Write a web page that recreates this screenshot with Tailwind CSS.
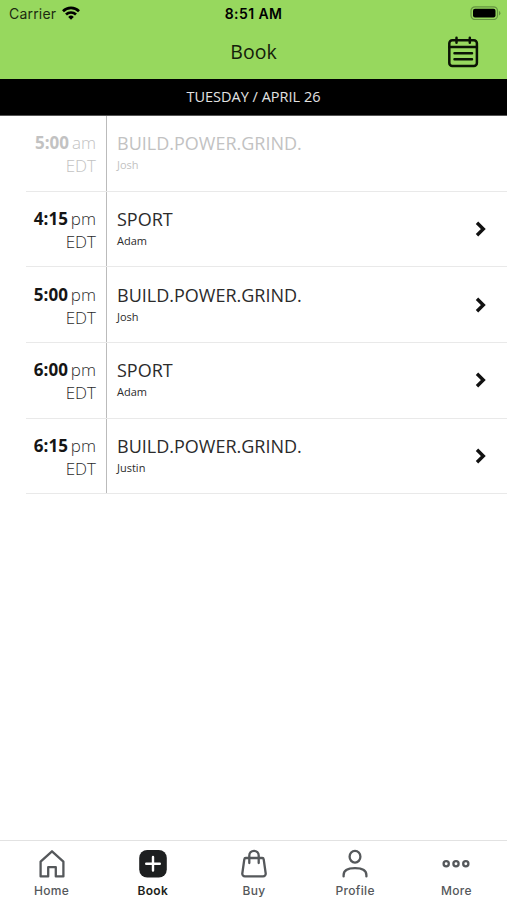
<!DOCTYPE html>
<html lang="en">
<head>
  <meta charset="UTF-8" />
  <meta name="viewport" content="width=device-width, initial-scale=1.0" />
  <title>Book</title>
  <script src="https://cdn.jsdelivr.net/npm/@tailwindcss/browser@4"></script>
</head>
<body class="bg-white h-screen overflow-hidden flex flex-col font-['Open_Sans',sans-serif] text-[#2b2b2b]">

  <!-- Header -->
  <header class="bg-[#97d85e] h-[79px] shrink-0 text-black">
    <div class="h-7 grid grid-cols-3 items-center font-['Inter',sans-serif] text-sm leading-none">
      <div class="flex items-center pl-[9px] gap-1.5">
        <span class="text-[14px] tracking-[0.2px] text-[#1c2b10]">Carrier</span>
        <svg class="w-[18px] h-[14px] -mt-0.5" viewBox="0 0 18 14" fill="none" stroke="#000" stroke-width="2.7">
          <path d="M1 5.2a11.5 11.5 0 0 1 16 0" />
          <path d="M4 8.5a7.2 7.2 0 0 1 10 0" />
          <path d="M9 13.7L6.2 10.9a4 4 0 0 1 5.6 0z" fill="#000" stroke="none" />
        </svg>
      </div>
      <div class="text-center font-semibold text-[14px] tracking-[0.4px] whitespace-nowrap">8:51 AM</div>
      <div class="flex justify-end pr-[6px]">
        <svg class="w-[31px] h-[14px] -mt-0.5" viewBox="0 0 31 14">
          <rect x="1" y="0.8" width="26.5" height="12.8" rx="4" fill="none" stroke="#659440" stroke-width="1.2" />
          <rect x="3" y="2.8" width="22.5" height="8.8" rx="2" />
          <path d="M29 5v4.4a2.4 2.4 0 0 0 0-4.4z" fill="#659440" />
        </svg>
      </div>
    </div>
    <div class="h-12 grid grid-cols-3 items-center">
      <div></div>
      <h1 class="text-center text-[19.5px] leading-6 text-[#14200a]">Book</h1>
      <div class="flex justify-end pr-[28px]">
        <svg class="w-8 h-8" viewBox="0 0 32 32" fill="none" stroke="#0b1305" stroke-width="2.5" stroke-linecap="round">
          <rect x="2.3" y="4.2" width="27.6" height="25.8" rx="3" />
          <path d="M2.3 11h27.6M9.5 1.8v5M22.8 1.8v5M7.5 17.3h17.5M7.5 23.3h17.5" />
        </svg>
      </div>
    </div>
  </header>

  <!-- Date -->
  <div class="bg-black h-[37px] shrink-0 flex items-center justify-center text-[#e2e2e2] text-[14.5px] leading-5 border-b border-[#555]">TUESDAY / APRIL 26</div>

  <!-- Classes -->
  <main class="flex-1 pl-[26px]">
    <div class="h-[75.7px] flex border-b border-[#e9e9e9] text-[#c2c2c2]">
      <div class="w-[81px] pr-[10px] pt-[15.4px] text-right border-r border-[#bbb] text-[17px] leading-[23px]">
        <div class="whitespace-nowrap"><b>5:00</b><span class="font-light ml-[3px]">am</span></div>
        <div class="font-light">EDT</div>
      </div>
      <div class="pl-[10px] pt-[15px] flex-1">
        <h2 class="text-[18px] leading-6">BUILD.POWER.GRIND.</h2>
        <p class="text-[11px] leading-5">Josh</p>
      </div>
    </div>

    <div class="h-[75.7px] flex border-b border-[#e9e9e9]">
      <div class="w-[81px] pr-[10px] pt-[15.4px] text-right border-r border-[#bbb] text-[17px] leading-[23px]">
        <div class="whitespace-nowrap"><b class="text-[#151515]">4:15</b><span class="font-light ml-[3px]">pm</span></div>
        <div class="font-light">EDT</div>
      </div>
      <div class="pl-[10px] pt-[15px] flex-1">
        <h2 class="text-[18px] leading-6">SPORT</h2>
        <p class="text-[11px] leading-5">Adam</p>
      </div>
      <svg class="w-3 h-4 self-center mr-5" viewBox="0 0 12 16" fill="none" stroke="#111" stroke-width="3.4"><path d="M2 1.8L8.3 8L2 14.2" /></svg>
    </div>

    <div class="h-[75.7px] flex border-b border-[#e9e9e9]">
      <div class="w-[81px] pr-[10px] pt-[15.4px] text-right border-r border-[#bbb] text-[17px] leading-[23px]">
        <div class="whitespace-nowrap"><b class="text-[#151515]">5:00</b><span class="font-light ml-[3px]">pm</span></div>
        <div class="font-light">EDT</div>
      </div>
      <div class="pl-[10px] pt-[15.4px] flex-1">
        <h2 class="text-[18px] leading-6">BUILD.POWER.GRIND.</h2>
        <p class="text-[11px] leading-5">Josh</p>
      </div>
      <svg class="w-3 h-4 self-center mr-5" viewBox="0 0 12 16" fill="none" stroke="#111" stroke-width="3.4"><path d="M2 1.8L8.3 8L2 14.2" /></svg>
    </div>

    <div class="h-[75.7px] flex border-b border-[#e9e9e9]">
      <div class="w-[81px] pr-[10px] pt-[15.4px] text-right border-r border-[#bbb] text-[17px] leading-[23px]">
        <div class="whitespace-nowrap"><b class="text-[#151515]">6:00</b><span class="font-light ml-[3px]">pm</span></div>
        <div class="font-light">EDT</div>
      </div>
      <div class="pl-[10px] pt-[15px] flex-1">
        <h2 class="text-[18px] leading-6">SPORT</h2>
        <p class="text-[11px] leading-5">Adam</p>
      </div>
      <svg class="w-3 h-4 self-center mr-5" viewBox="0 0 12 16" fill="none" stroke="#111" stroke-width="3.4"><path d="M2 1.8L8.3 8L2 14.2" /></svg>
    </div>

    <div class="h-[75.7px] flex border-b border-[#e9e9e9]">
      <div class="w-[81px] pr-[10px] pt-[15.4px] text-right border-r border-[#bbb] text-[17px] leading-[23px]">
        <div class="whitespace-nowrap"><b class="text-[#151515]">6:15</b><span class="font-light ml-[3px]">pm</span></div>
        <div class="font-light">EDT</div>
      </div>
      <div class="pl-[10px] pt-[15px] flex-1">
        <h2 class="text-[18px] leading-6">BUILD.POWER.GRIND.</h2>
        <p class="text-[11px] leading-5">Justin</p>
      </div>
      <svg class="w-3 h-4 self-center mr-5" viewBox="0 0 12 16" fill="none" stroke="#111" stroke-width="3.4"><path d="M2 1.8L8.3 8L2 14.2" /></svg>
    </div>
  </main>

  <!-- Tab bar -->
  <nav class="h-[60px] shrink-0 border-t border-[#e2e2e2] grid grid-cols-5 pl-px font-['Inter',sans-serif] text-[12px] leading-4 font-medium tracking-[0.3px] text-[#55585b]">
    <a class="flex flex-col items-center pt-2">
      <svg class="w-8 h-[30px]" viewBox="0 0 32 30" fill="none" stroke="currentColor" stroke-width="2.3" stroke-linejoin="round">
        <path d="M4.6 12.6L16 2.3l11.4 10.3v14.8h-7.6v-9.2h-7.6v9.2H4.6z" />
      </svg>
      <span class="mt-1">Home</span>
    </a>
    <a class="flex flex-col items-center pt-2 text-[#1d1f20] font-semibold">
      <svg class="w-8 h-[30px]" viewBox="0 0 32 30" fill="none">
        <rect x="2.2" y="1" width="27.6" height="27.6" rx="8" fill="currentColor" />
        <path d="M16 8v13.6M9.2 14.8h13.6" stroke="#fff" stroke-width="2.4" stroke-linecap="round" />
      </svg>
      <span class="mt-1">Book</span>
    </a>
    <a class="flex flex-col items-center pt-2">
      <svg class="w-8 h-[30px]" viewBox="0 0 32 30" fill="none" stroke="currentColor" stroke-width="2.3" stroke-linecap="round" stroke-linejoin="round">
        <path d="M7.8 9h16.4a1.5 1.5 0 0 1 1.5 1.3l2 14.2a2.6 2.6 0 0 1-2.6 2.9H6.9a2.6 2.6 0 0 1-2.6-2.9l2-14.2A1.5 1.5 0 0 1 7.8 9z" />
        <path d="M11.3 14V6.5a4.7 4.7 0 0 1 9.4 0V14" />
      </svg>
      <span class="mt-1">Buy</span>
    </a>
    <a class="flex flex-col items-center pt-2">
      <svg class="w-8 h-[30px]" viewBox="0 0 32 30" fill="none" stroke="currentColor" stroke-width="2.3" stroke-linecap="round">
        <ellipse cx="16" cy="7.7" rx="5.4" ry="5.9" />
        <path d="M4.6 27.4v-1.2c0-4.6 4.4-7 11.4-7s11.4 2.4 11.4 7v1.2" />
      </svg>
      <span class="mt-1">Profile</span>
    </a>
    <a class="flex flex-col items-center pt-2">
      <svg class="w-8 h-[30px]" viewBox="0 0 32 30" fill="none" stroke="currentColor" stroke-width="2.3">
        <circle cx="6.2" cy="14.7" r="2.6" />
        <circle cx="16" cy="14.7" r="2.6" />
        <circle cx="25.8" cy="14.7" r="2.6" />
      </svg>
      <span class="mt-1">More</span>
    </a>
  </nav>

</body>
</html>
